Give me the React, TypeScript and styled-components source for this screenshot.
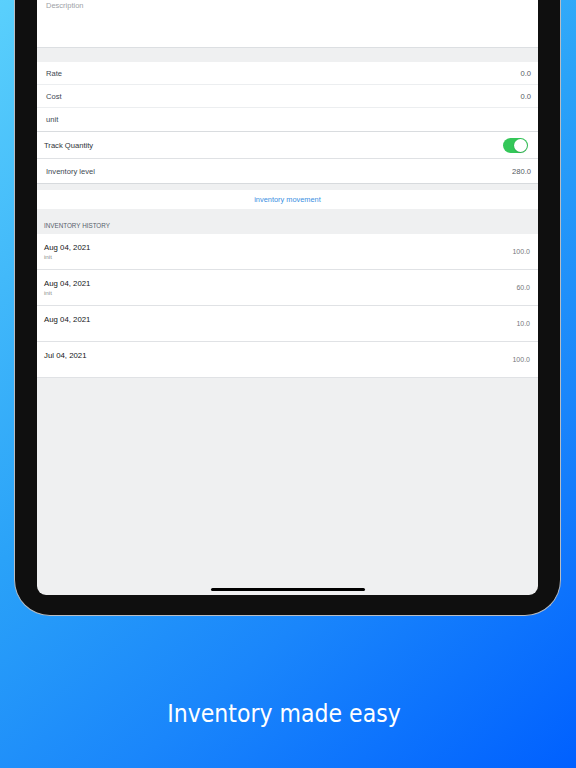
import styled, {createGlobalStyle} from "styled-components";

const GlobalStyle = createGlobalStyle`
    html, body {
        margin: 0;
        padding: 0;
    }
    body {
        font-family: "Liberation Sans", Arial, sans-serif;
    }
`;

const history = [
    {date: "Aug 04, 2021", note: "init", qty: "100.0"},
    {date: "Aug 04, 2021", note: "init", qty: "60.0"},
    {date: "Aug 04, 2021", note: "", qty: "10.0"},
    {date: "Jul 04, 2021", note: "", qty: "100.0"},
];

const fields = [
    {label: "Rate", value: "0.0"},
    {label: "Cost", value: "0.0"},
    {label: "unit", value: ""},
];

export default function App() {
    return (
        <Page>
            <GlobalStyle/>
            <Device>
                <Screen>
                    <DescriptionCell>Description</DescriptionCell>
                    <Gap $h={14}/>
                    <Group>
                        {fields.map((f, i) => (
                            <FieldRow key={f.label} $last={i === fields.length - 1}>
                                <Label>{f.label}</Label>
                                <Value>{f.value}</Value>
                            </FieldRow>
                        ))}
                    </Group>
                    <TrackRow>
                        <Label $dark>Track Quantity</Label>
                        <Toggle><Knob/></Toggle>
                    </TrackRow>
                    <LevelRow>
                        <Label>Inventory level</Label>
                        <Value>280.0</Value>
                    </LevelRow>
                    <Gap $h={6}/>
                    <LinkRow>inventory movement</LinkRow>
                    <SectionHeader>INVENTORY HISTORY</SectionHeader>
                    {history.map((h, i) => (
                        <HistoryRow key={i}>
                            <HistoryText>
                                <DateText>{h.date}</DateText>
                                <Note>{h.note}</Note>
                            </HistoryText>
                            <Qty>{h.qty}</Qty>
                        </HistoryRow>
                    ))}
                    <Filler/>
                    <HomeBar/>
                </Screen>
            </Device>
            <Caption>Inventory made easy</Caption>
        </Page>
    );
}

const Page = styled.div`
    width: 576px;
    height: 768px;
    overflow: hidden;
    display: flex;
    flex-direction: column;
    background: linear-gradient(140deg, #5ad0fc 0%, #2aa2f8 45%, #1a86fb 70%, #0060ff 100%);
`;

const Device = styled.div`
    margin-left: 14px;
    width: 547px;
    height: 616px;
    box-sizing: border-box;
    padding: 0 22px 20px 22px;
    background: #0f0f0f;
    border: 1px solid #b8bdc3;
    border-top: none;
    border-radius: 0 0 36px 36px;
    display: flex;
`;

const Screen = styled.div`
    flex: 1;
    display: flex;
    flex-direction: column;
    background: #eff0f1;
    border-radius: 0 0 9px 9px;
    overflow: hidden;
`;

const DescriptionCell = styled.div`
    height: 46px;
    background: #fff;
    padding: 1px 9px 0;
    font-size: 7.5px;
    line-height: 9px;
    color: #9da1a6;
    border-bottom: 1px solid #dcdfe2;
`;

const Gap = styled.div<{ $h: number }>`
    height: ${p => p.$h}px;
    flex-shrink: 0;
`;

const Group = styled.div`
    background: #fff;
    border-bottom: 1px solid #d9dcdf;
`;

const FieldRow = styled.div<{ $last?: boolean }>`
    height: ${p => p.$last ? 23 : 22}px;
    display: flex;
    align-items: center;
    justify-content: space-between;
    padding: 0 7px 0 9px;
    border-bottom: ${p => p.$last ? "none" : "1px solid #eceef0"};
`;

const Label = styled.span<{ $dark?: boolean }>`
    font-size: 7.6px;
    color: ${p => p.$dark ? "#2e3338" : "#3d4852"};
`;

const Value = styled.span`
    font-size: 7.6px;
    color: #555a5f;
`;

const TrackRow = styled.div`
    height: 26px;
    display: flex;
    align-items: center;
    justify-content: space-between;
    padding: 0 10px 0 7px;
    background: #fff;
    border-bottom: 1px solid #dfe1e4;
`;

const Toggle = styled.div`
    width: 25px;
    height: 15px;
    border-radius: 8px;
    background: #34c759;
    display: flex;
    align-items: center;
    justify-content: flex-end;
    padding: 0 1px;
    box-sizing: border-box;
`;

const Knob = styled.div`
    width: 13px;
    height: 13px;
    border-radius: 50%;
    background: #fff;
    box-shadow: 0 0.5px 1.5px rgba(0, 0, 0, 0.25);
`;

const LevelRow = styled.div`
    height: 24px;
    display: flex;
    align-items: center;
    justify-content: space-between;
    padding: 0 7px 0 9px;
    background: #fff;
    border-bottom: 1px solid #d7dadd;
`;

const LinkRow = styled.div`
    height: 19px;
    display: flex;
    align-items: center;
    justify-content: center;
    background: #fff;
    font-size: 7.4px;
    color: #3a8fe2;
`;

const SectionHeader = styled.div`
    height: 25px;
    display: flex;
    align-items: center;
    padding: 7px 7px 0;
    box-sizing: border-box;
    font-size: 6.3px;
    color: #56616b;
`;

const HistoryRow = styled.div`
    height: 35px;
    display: flex;
    align-items: center;
    justify-content: space-between;
    padding: 0 8px 0 7px;
    background: #fff;
    border-bottom: 1px solid #e0e2e5;
`;

const HistoryText = styled.div`
    display: flex;
    flex-direction: column;
    align-self: flex-start;
    padding-top: 9px;
`;

const DateText = styled.span`
    font-size: 7.8px;
    line-height: 10px;
    color: #141618;
`;

const Note = styled.span`
    font-size: 6.2px;
    line-height: 7px;
    color: #8a8e92;
`;

const Qty = styled.span`
    font-size: 7px;
    color: #74787c;
`;

const Filler = styled.div`
    flex: 1;
`;

const HomeBar = styled.div`
    align-self: center;
    width: 154px;
    height: 3px;
    border-radius: 2px;
    background: #000;
    margin: 0 0 4px 0;
`;

const Caption = styled.div`
    padding: 83px 8px 0 0;
    text-align: center;
    font-family: "DejaVu Sans Condensed", "DejaVu Sans", sans-serif;
    font-stretch: condensed;
    font-size: 24.5px;
    line-height: 30px;
    color: #fff;
`;
